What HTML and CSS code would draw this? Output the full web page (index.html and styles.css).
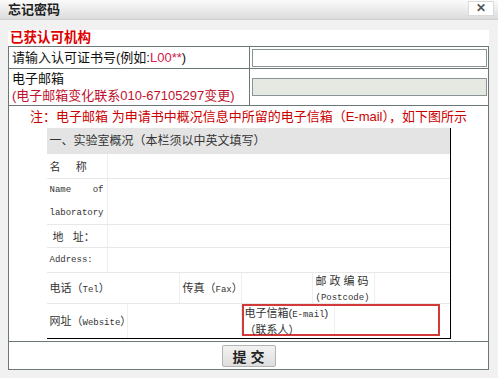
FILE: index.html
```html
<!DOCTYPE html>
<html lang="zh-CN">

<head>
    <meta charset="UTF-8">
    <meta name="viewport" content="width=device-width, initial-scale=1.0">
    <title>忘记密码</title>

    <link rel="stylesheet" href="styles.css">
</head>

<body>
    <div class="titlebar">
        <span class="title">忘记密码</span>
        <span class="close">✕</span>
    </div>

    <div class="content">
        <div class="panel">
            <div class="heading">已获认可机构</div>

            <table class="form">
                <tr class="row-cert">
                    <td class="label">请输入认可证书号(例如:<span class="hint">L00**</span>)</td>
                    <td class="field"><input type="text" class="box"></td>
                </tr>
                <tr class="row-mail">
                    <td class="label">电子邮箱<br><span class="tip">(电子邮箱变化联系010-67105297变更)</span></td>
                    <td class="field"><input type="text" class="box box-off" disabled></td>
                </tr>
                <tr>
                    <td colspan="2" class="note-cell">
                        <p class="note">注：电子邮箱 为申请书中概况信息中所留的电子信箱（E-mail），如下图所示</p>

                        <div class="sample">
                            <div class="s-head">一、实验室概况（本栏须以中英文填写）</div>
                            <div class="s-row r-name">
                                <div class="s-key">名&nbsp;&nbsp;&nbsp;&nbsp;&nbsp;称</div>
                                <div class="s-val"></div>
                            </div>
                            <div class="s-row r-lab">
                                <div class="s-key mono">Name&nbsp;&nbsp;&nbsp;&nbsp;of<br>laboratory</div>
                                <div class="s-val"></div>
                            </div>
                            <div class="s-row r-addr">
                                <div class="s-key">&nbsp;地&nbsp;&nbsp;&nbsp;址：</div>
                                <div class="s-val"></div>
                            </div>
                            <div class="s-row r-addr-en">
                                <div class="s-key mono">Address:</div>
                                <div class="s-val"></div>
                            </div>
                            <div class="s-row r-tel">
                                <div class="s-cell w-tel">电话（<span class="mono">Tel</span>）</div>
                                <div class="s-cell w-fax">传真（<span class="mono">Fax</span>）</div>
                                <div class="s-cell w-faxv"></div>
                                <div class="s-cell w-post"><span class="spaced">邮政编码</span><br><span class="mono">(Postcode)</span></div>
                                <div class="s-val"></div>
                            </div>
                            <div class="s-row r-web">
                                <div class="s-cell w-web">网址（<span class="mono">Website</span>）</div>
                                <div class="s-cell w-webv"></div>
                                <div class="mark">
                                    <div class="s-cell w-mail">电子信箱(<span class="mono">E-mail</span>)<br>（联系人）</div>
                                </div>
                                <div class="s-val"></div>
                            </div>
                        </div>
                    </td>
                </tr>
                <tr>
                    <td colspan="2" class="submit-cell"><button class="submit">提交</button></td>
                </tr>
            </table>
        </div>
    </div>
</body>

</html>
```

FILE: styles.css
```css
* {
    padding: 0;
    margin: 0;
    box-sizing: border-box;
}

body {
    background-color: #f1f1f1;
    font-family: "Liberation Sans", "Noto Sans CJK SC", sans-serif;
    font-size: 13px;
    color: #111;
}

.titlebar {
    height: 20px;
    padding: 0 4px 0 8px;
    display: flex;
    justify-content: space-between;
    background: linear-gradient(#fbfbfb, #dcdcdc);
    border-bottom: 1px solid #cfcfcf;
}

.title {
    font-weight: bold;
    line-height: 19px;
    color: #222;
}

.close {
    width: 26px;
    height: 15px;
    margin-top: 1px;
    background-color: #fff;
    border: 1px solid #dadada;
    color: #555;
    font-size: 12px;
    font-weight: bold;
    line-height: 13px;
    text-align: center;
}

.content {
    padding: 10px 9px 0 8px;
}

.panel {
    background-color: #fff;
}

.heading {
    height: 16px;
    line-height: 15px;
    color: #dd0000;
    font-weight: bold;
    font-size: 13.5px;
    padding-left: 2px;
}

.form {
    width: 481px;
    border-collapse: collapse;
    border: 1px solid #5f6d6d;
}

.form td {
    border: 1px solid #6c7878;
    padding: 0;
    vertical-align: middle;
}

.label {
    width: 242px;
    padding-left: 3px !important;
}

.row-cert td {
    height: 22px;
    line-height: 18px;
}

.row-mail td {
    height: 37px;
    line-height: 17px;
}

.hint {
    color: #d4204c;
}

.tip {
    color: #c0102c;
}

.field {
    padding: 0 1px 0 2px !important;
}

.box {
    display: block;
    width: 235px;
    height: 18px;
    border: 1px solid #8a9494;
    background-color: #fff;
}

.box-off {
    background-color: #e6e8e2;
}

.note-cell {
    padding-bottom: 2px !important;
}

.note {
    color: #cc0000;
    text-align: center;
    line-height: 19px;
    margin-top: 1px;
}

/* sample form picture */
.sample {
    width: 404px;
    margin: 2px auto 0;
    border-right: 1px solid #000;
    border-bottom: 1px solid #000;
    font-size: 11px;
    color: #333;
}

.mono {
    font-family: "Liberation Mono", monospace;
    font-size: 9px;
}

.s-head {
    height: 26px;
    line-height: 26px;
    padding-left: 3px;
    background-color: #e4e4e4;
    font-size: 12px;
}

.s-row {
    display: flex;
    border-bottom: 1px solid #e8e8e8;
}

.s-row:last-child {
    border-bottom: none;
}

.s-key {
    width: 61px;
    padding-left: 3px;
    border-right: 1px solid #efefef;
    display: flex;
    align-items: center;
}

.s-val {
    flex: 1;
}

.s-cell {
    padding-left: 3px;
    border-right: 1px solid #efefef;
    white-space: nowrap;
}

.r-name { height: 25px; }
.r-lab { height: 46px; line-height: 23px; }
.r-addr { height: 23px; }
.r-addr-en { height: 25px; }
.r-tel { height: 31px; line-height: 15px; }
.r-web { height: 34px; line-height: 15px; }

.w-tel { width: 133px; line-height: 31px; }
.w-fax { width: 62px; line-height: 31px; }
.w-faxv { width: 71px; }
.w-post { width: 62px; padding-top: 1px; }
.w-web { width: 81px; line-height: 34px; }
.w-webv { width: 114px; }

.spaced {
    letter-spacing: 3px;
}

.mark {
    width: 198px;
    border: 2px solid #d23a3a;
    margin-bottom: 2px;
    display: flex;
}

.w-mail {
    width: 91px;
    padding-left: 1px;
}

.submit-cell {
    height: 28px;
    text-align: center;
}

.submit {
    width: 54px;
    height: 22px;
    font-family: "Noto Sans CJK SC", sans-serif;
    font-size: 14px;
    font-weight: bold;
    letter-spacing: 4px;
    padding-left: 4px;
    color: #222;
    background: linear-gradient(#f2f2f2, #dedede);
    border: 1px solid #b4b4b4;
    border-radius: 2px;
}
```
